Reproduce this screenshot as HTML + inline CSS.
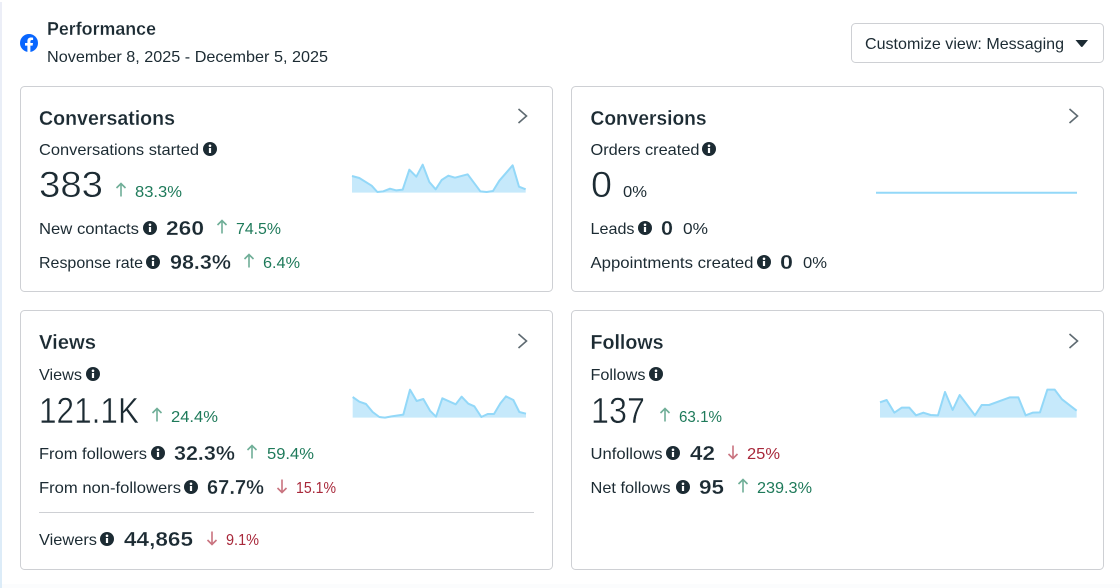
<!DOCTYPE html>
<html><head><meta charset="utf-8"><style>
html,body{margin:0;padding:0;background:#fff;width:1120px;height:588px;overflow:hidden}
svg{display:block;font-family:"Liberation Sans",sans-serif}
text{fill:#1c2b33;font-size:16px}
.t{font-size:20px;font-weight:bold;stroke:#fff;stroke-width:.2}
.h{font-size:36px;stroke:#fff;stroke-width:.5}
.b{font-size:20px;font-weight:bold;stroke:#fff;stroke-width:.25}
.g{fill:#1e7a5a}
.r{fill:#a8283a}
.card{fill:#fff;stroke:#ced0d4;stroke-width:1}
.chev{fill:none;stroke:#5e6a71;stroke-width:1.6}
.au{fill:none;stroke:#6fae97;stroke-width:1.6}
.ad{fill:none;stroke:#c9737f;stroke-width:1.6}
.area{fill:#c6e9fb}
.line{fill:none;stroke:#93d8f8;stroke-width:6;stroke-linejoin:round}
</style></head><body>
<svg width="1120" height="588" viewBox="0 0 1120 588" xmlns="http://www.w3.org/2000/svg">
<defs>
<linearGradient id="edge" x1="0" y1="0" x2="0" y2="1"><stop offset="0" stop-color="#eceef7"/><stop offset="1" stop-color="#dcecf8"/></linearGradient>
<g id="i"><circle r="7" fill="#1c2b33"/><rect x="-1.1" y="-1" width="2.2" height="5" fill="#fff"/><circle cy="-3.2" r="1.3" fill="#fff"/></g>
<path id="up" class="au" d="M0 -6.5V6.5M-4.5 -2L0 -6.5L4.5 -2"/>
<path id="dn" class="ad" d="M0 -6.5V6.5M-4.5 2L0 6.5L4.5 2"/>
<path id="ch" class="chev" d="M-4 -7L4 0L-4 7"/>
</defs>
<rect width="1120" height="588" fill="#fff"/>
<rect x="0" y="2" width="2" height="586" fill="url(#edge)"/>
<rect x="2" y="584" width="1118" height="4" fill="#fbfcfd"/>

<circle cx="29" cy="43" r="9" fill="#0866ff"/>
<path d="M30.4 52V45.6H32.6L33 43H30.4V41.5C30.4 40.6 30.8 40 32 40H33.1V37.7C32.6 37.6 31.8 37.5 31 37.5C28.8 37.5 27.4 38.8 27.4 41.1V43H25V45.6H27.4V52Z" fill="#fff"/>
<text x="47" y="35" font-weight="bold" style="font-size:18px;stroke:#fff;stroke-width:.2" textLength="109" lengthAdjust="spacingAndGlyphs">Performance</text>
<text x="47" y="62" textLength="281" lengthAdjust="spacingAndGlyphs">November 8, 2025 - December 5, 2025</text>

<rect x="851.5" y="23.5" width="252" height="39" rx="4" class="card"/>
<text x="865" y="49" textLength="199" lengthAdjust="spacingAndGlyphs">Customize view: Messaging</text>
<path d="M1075.5 40H1088L1082.6 46.6Q1081.8 47.4 1081 46.6Z" fill="#1c2b33"/>

<rect x="20.5" y="86.5" width="532" height="205" rx="4" class="card"/>
<rect x="571.5" y="86.5" width="532" height="205" rx="4" class="card"/>
<rect x="20.5" y="310.5" width="532" height="259" rx="4" class="card"/>
<rect x="571.5" y="310.5" width="532" height="259" rx="4" class="card"/>

<use href="#ch" x="522.5" y="116"/>
<use href="#ch" x="1073.5" y="116"/>
<use href="#ch" x="522.5" y="341"/>
<use href="#ch" x="1073.5" y="341"/>

<!-- Conversations -->
<text x="39" y="125" class="t" textLength="136" lengthAdjust="spacingAndGlyphs">Conversations</text>
<text x="39" y="155" textLength="160" lengthAdjust="spacingAndGlyphs">Conversations started</text>
<use href="#i" x="210" y="149"/>
<text x="39" y="197" class="h" textLength="64" lengthAdjust="spacingAndGlyphs">383</text>
<use href="#up" x="121" y="190"/>
<text x="135" y="197" class="g" textLength="47" lengthAdjust="spacingAndGlyphs">83.3%</text>
<text x="39" y="234" textLength="100" lengthAdjust="spacingAndGlyphs">New contacts</text>
<use href="#i" x="150" y="228"/>
<text x="166" y="235" class="b" textLength="38" lengthAdjust="spacingAndGlyphs">260</text>
<use href="#up" x="222" y="227"/>
<text x="236" y="234" class="g" textLength="45" lengthAdjust="spacingAndGlyphs">74.5%</text>
<text x="39" y="268" textLength="104" lengthAdjust="spacingAndGlyphs">Response rate</text>
<use href="#i" x="153" y="262"/>
<text x="170" y="269" class="b" textLength="61" lengthAdjust="spacingAndGlyphs">98.3%</text>
<use href="#up" x="249" y="261"/>
<text x="263" y="268" class="g" textLength="37" lengthAdjust="spacingAndGlyphs">6.4%</text>
<g transform="translate(340 90) scale(.33333)">
<path class="area" d="M36 258L58 264L95 287L112 306L130 304L150 296L168 301L188 299L208 239L229 260L248 224L268 276L287 298L305 270L325 257L345 263L383 253L421 304L440 306L459 303L478 272L518 226L537 290L557 298V308H36Z"/>
<path class="line" d="M36 258L58 264L95 287L112 306L130 304L150 296L168 301L188 299L208 239L229 260L248 224L268 276L287 298L305 270L325 257L345 263L383 253L421 304L440 306L459 303L478 272L518 226L537 290L557 298"/>
</g>

<!-- Conversions -->
<text x="590.5" y="125" class="t" textLength="116" lengthAdjust="spacingAndGlyphs">Conversions</text>
<text x="590.5" y="155" textLength="109" lengthAdjust="spacingAndGlyphs">Orders created</text>
<use href="#i" x="709" y="149"/>
<text x="591" y="197" class="h" textLength="21" lengthAdjust="spacingAndGlyphs">0</text>
<text x="623" y="197" textLength="24" lengthAdjust="spacingAndGlyphs">0%</text>
<text x="590.5" y="234" textLength="44" lengthAdjust="spacingAndGlyphs">Leads</text>
<use href="#i" x="645" y="228"/>
<text x="661" y="235" class="b" textLength="12" lengthAdjust="spacingAndGlyphs">0</text>
<text x="683" y="234" textLength="25" lengthAdjust="spacingAndGlyphs">0%</text>
<text x="590.5" y="268" textLength="163" lengthAdjust="spacingAndGlyphs">Appointments created</text>
<use href="#i" x="764" y="262"/>
<text x="780" y="269" class="b" textLength="13" lengthAdjust="spacingAndGlyphs">0</text>
<text x="803" y="268" textLength="24" lengthAdjust="spacingAndGlyphs">0%</text>
<path d="M876 192.7H1077" stroke="#93d8f8" stroke-width="2" fill="none"/>

<!-- Views -->
<text x="39" y="349" class="t" textLength="57" lengthAdjust="spacingAndGlyphs">Views</text>
<text x="39" y="380" textLength="43" lengthAdjust="spacingAndGlyphs">Views</text>
<use href="#i" x="93" y="374"/>
<text x="39" y="423" class="h" textLength="100" lengthAdjust="spacingAndGlyphs">121.1K</text>
<use href="#up" x="157" y="415"/>
<text x="171" y="422" class="g" textLength="47" lengthAdjust="spacingAndGlyphs">24.4%</text>
<text x="39" y="459" textLength="108" lengthAdjust="spacingAndGlyphs">From followers</text>
<use href="#i" x="158" y="453"/>
<text x="174" y="460" class="b" textLength="61" lengthAdjust="spacingAndGlyphs">32.3%</text>
<use href="#up" x="252" y="452"/>
<text x="267" y="459" class="g" textLength="47" lengthAdjust="spacingAndGlyphs">59.4%</text>
<text x="39" y="493" textLength="142" lengthAdjust="spacingAndGlyphs">From non-followers</text>
<use href="#i" x="191" y="487"/>
<text x="207" y="494" class="b" textLength="57" lengthAdjust="spacingAndGlyphs">67.7%</text>
<use href="#dn" x="282" y="486"/>
<text x="296" y="493" class="r" textLength="40" lengthAdjust="spacingAndGlyphs">15.1%</text>
<path d="M39 512.5H534" stroke="#ced0d4" stroke-width="1"/>
<text x="39" y="545" textLength="58" lengthAdjust="spacingAndGlyphs">Viewers</text>
<use href="#i" x="107" y="539"/>
<text x="124" y="546" class="b" textLength="69" lengthAdjust="spacingAndGlyphs">44,865</text>
<use href="#dn" x="212" y="538"/>
<text x="226" y="545" class="r" textLength="33" lengthAdjust="spacingAndGlyphs">9.1%</text>
<g transform="translate(340 320) scale(.33333)">
<path class="area" d="M38 231L58 245L78 252L98 276L118 291L135 293L155 289L190 284L210 209L230 243L250 237L270 272L288 290L307 235L347 253L365 230L385 251L403 259L424 291L443 282L462 282L481 250L498 229L520 240L538 276L558 281V293H38Z"/>
<path class="line" d="M38 231L58 245L78 252L98 276L118 291L135 293L155 289L190 284L210 209L230 243L250 237L270 272L288 290L307 235L347 253L365 230L385 251L403 259L424 291L443 282L462 282L481 250L498 229L520 240L538 276L558 281"/>
</g>

<!-- Follows -->
<text x="590.5" y="349" class="t" textLength="73" lengthAdjust="spacingAndGlyphs">Follows</text>
<text x="590.5" y="380" textLength="55" lengthAdjust="spacingAndGlyphs">Follows</text>
<use href="#i" x="656" y="374"/>
<text x="591" y="423" class="h" textLength="54" lengthAdjust="spacingAndGlyphs">137</text>
<use href="#up" x="665" y="415"/>
<text x="679" y="422" class="g" textLength="43" lengthAdjust="spacingAndGlyphs">63.1%</text>
<text x="590.5" y="459" textLength="72" lengthAdjust="spacingAndGlyphs">Unfollows</text>
<use href="#i" x="673" y="453"/>
<text x="690" y="460" class="b" textLength="25" lengthAdjust="spacingAndGlyphs">42</text>
<use href="#dn" x="733" y="452"/>
<text x="747" y="459" class="r" textLength="33" lengthAdjust="spacingAndGlyphs">25%</text>
<text x="590.5" y="493" textLength="80" lengthAdjust="spacingAndGlyphs">Net follows</text>
<use href="#i" x="683" y="487"/>
<text x="699" y="494" class="b" textLength="25" lengthAdjust="spacingAndGlyphs">95</text>
<use href="#up" x="743" y="486"/>
<text x="757" y="493" class="g" textLength="55" lengthAdjust="spacingAndGlyphs">239.3%</text>
<g transform="translate(860 320) scale(.33333)">
<path class="area" d="M60 247L80 240L103 278L125 263L148 263L168 286L190 278L212 285L234 286L255 216L278 270L299 225L345 286L365 255L387 255L450 232L475 232L497 286L518 278L540 277L562 209L584 209L606 238L650 272V293H60Z"/>
<path class="line" d="M60 247L80 240L103 278L125 263L148 263L168 286L190 278L212 285L234 286L255 216L278 270L299 225L345 286L365 255L387 255L450 232L475 232L497 286L518 278L540 277L562 209L584 209L606 238L650 272"/>
</g>
</svg>
</body></html>
